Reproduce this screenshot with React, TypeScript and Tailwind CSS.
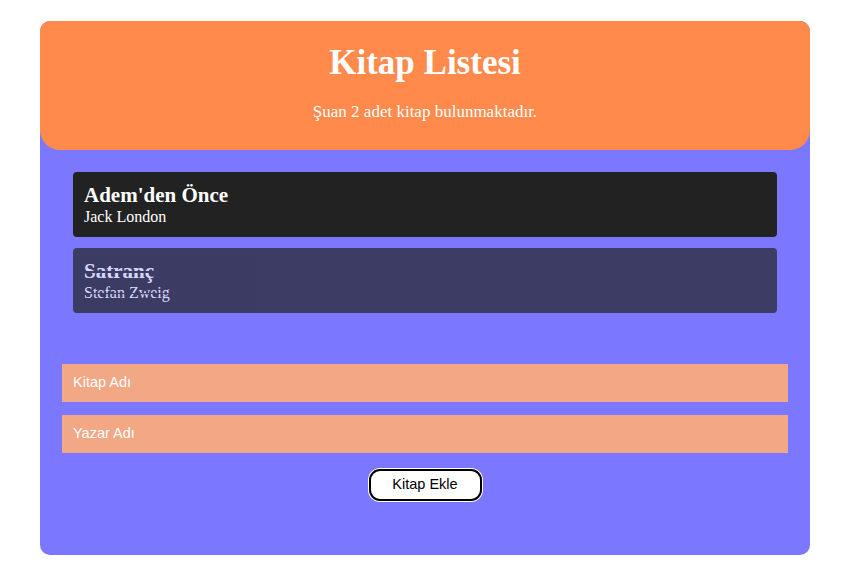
import React from "react";

export default function App() {
  const books = [
    { title: "Adem'den Önce", author: "Jack London", read: false },
    { title: "Satranç", author: "Stefan Zweig", read: true },
  ];
  return (
    <div className="w-[858px] h-[579px] bg-white pt-[21px]">
      <div className="mx-[40px] w-[770px] h-[534px] bg-[#7b78ff] rounded-[10px] flex flex-col">
        <div
          className="h-[129px] bg-[#ff8a4c] rounded-[10px] rounded-b-[20px] flex flex-col items-center text-white"
          style={{ fontFamily: '"Liberation Serif", serif' }}
        >
          <h1 className="mt-[22px] text-[35px] leading-[40px] font-bold">Kitap Listesi</h1>
          <p className="mt-[19px] text-[17px] leading-[19px]">Şuan 2 adet kitap bulunmaktadır.</p>
        </div>
        <div className="px-[33px] pt-[22px] flex flex-col gap-[11px]" style={{ fontFamily: '"Liberation Serif", serif' }}>
          {books.map((b) => (
            <div
              key={b.title}
              className={
                "h-[65px] rounded-[4px] bg-[#222222] text-white px-[11px] pt-[11px] " +
                (b.read ? "opacity-70 line-through decoration-[#222222]" : "")
              }
            >
              <div className="text-[21px] leading-[24px] font-bold">{b.title}</div>
              <div className="text-[16px] leading-[19px]">{b.author}</div>
            </div>
          ))}
        </div>
        <div className="px-[22px] mt-[51px] flex flex-col gap-[13px]" style={{ fontFamily: '"Liberation Sans", sans-serif' }}>
          <div className="h-[38px] bg-[#f2a785] text-white text-[14.5px] flex items-center px-[11px]">Kitap Adı</div>
          <div className="h-[38px] bg-[#f2a785] text-white text-[14.5px] flex items-center px-[11px]">Yazar Adı</div>
        </div>
        <div className="flex justify-center mt-[16px]">
          <button
            className="w-[113px] h-[32px] bg-white border-2 border-black rounded-[11px] ring-1 ring-white text-black text-[14.5px]"
            style={{ fontFamily: '"Liberation Sans", sans-serif' }}
          >
            Kitap Ekle
          </button>
        </div>
      </div>
    </div>
  );
}
